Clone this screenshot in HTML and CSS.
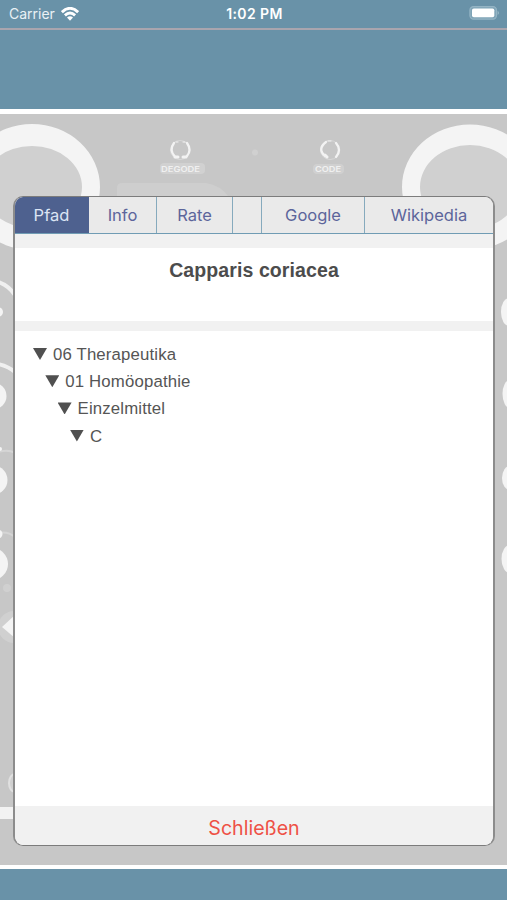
FILE: index.html
```html
<!DOCTYPE html>
<html lang="de">
<head>
<meta charset="utf-8">
<title>Capparis coriacea</title>
<link rel="stylesheet" href="styles.css">
</head>
<body>
<header class="status">
  <div class="carrier">
    <span>Carrier</span>
    <svg class="wifi" viewBox="0 0 18 14" width="18" height="14">
      <g fill="none" stroke="#fff" stroke-width="2.9">
        <path d="M.9 5.1Q9-2.4 17.1 5.1"/>
        <path d="M3.9 8.4Q9 3.7 14.1 8.4"/>
      </g>
      <path d="M6 10.6Q9 8 12 10.6L9 13.8Z" fill="#fff"/>
    </svg>
  </div>
  <time class="clock">1:02 PM</time>
  <svg class="battery" viewBox="0 0 31 14" width="31" height="14">
    <rect x=".9" y=".6" width="26.6" height="12.6" rx="3.6" fill="#7fa4b7" stroke="#94b4c4" stroke-width="1.2"/>
    <rect x="3" y="2.4" width="22.3" height="8.800" rx="1.8" fill="#fff"/>
    <path d="M28.7 4.7Q30.9 6.900 28.7 9Z" fill="#a3bfcd"/>
  </svg>
</header>
<div class="band"></div>
<main class="stage">
  <svg class="panel" viewBox="0 114 507 751" width="507" height="751">
    <g fill="#d0d0d0">
      <ellipse cx="32" cy="187" rx="59" ry="52"/>
      <ellipse cx="470" cy="187" rx="59" ry="52"/>
    </g>
    <g fill="#f4f4f4" fill-rule="evenodd">
      <path d="M-36 187a68 63 0 1 0 136 0a68 63 0 1 0-136 0M-18 187a50 41 0 1 0 100 0a50 41 0 1 0-100 0"/>
      <path d="M402 187a68 62.500 0 1 0 136 0a68 62.500 0 1 0-136 0M420 187a50 42 0 1 0 100 0a50 42 0 1 0-100 0"/>
    </g>
    <path d="M117 197v-9q0-5 5-5h84q14 2 23 14Z" fill="#cecece"/>
    <g fill="none" stroke="#d8d8d8" stroke-width="1">
      <circle cx="180" cy="150" r="9.500"/>
      <circle cx="330" cy="150" r="9.500"/>
    </g>
    <g fill="none" stroke="#f3f3f3" stroke-width="2.300" stroke-linecap="round">
      <path d="M174 143Q169 150 174.500 156M187 143Q192 150 187 156"/>
      <path d="M326 142Q317 149 325 156M336 143Q342 150 336 157"/>
      <path d="M175 157h3M183 157h3M325 155l2 2" stroke-width="3"/>
      <path d="M176 142h2M183 142h2M328 141h3" stroke-width="1"/>
    </g>
    <rect x="160" y="163" width="45" height="11" rx="4" fill="#d1d1d1"/>
    <rect x="313" y="164" width="31" height="10" rx="4" fill="#d0d0d0"/>
    <text class="mark" x="161" y="172" textLength="39" lengthAdjust="spacingAndGlyphs">DEGODE</text>
    <text class="mark" x="315" y="172" textLength="26" lengthAdjust="spacingAndGlyphs">CODE</text>
    <circle cx="255" cy="152.500" r="3" fill="#d0d0d0"/>
    <g fill="none" stroke="#f0f0f0" stroke-width="4">
      <path d="M-2 282Q8 285 15 295M-2 364Q8 366 15 372"/>
      <path d="M-2 452Q8 449 15 453M-2 533Q8 531 15 537" stroke="#d5d5d5" stroke-width="2"/>
    </g>
    <g fill="#f4f4f4">
      <circle cx="-2" cy="312" r="5"/>
      <circle cx="-7" cy="396" r="13.500"/>
      <circle cx="0" cy="449" r="2"/>
      <circle cx="-7" cy="480" r="14.500"/>
      <circle cx="-2" cy="534" r="4.500"/>
      <circle cx="-8" cy="564" r="16"/>
      <ellipse cx="509" cy="312" rx="8" ry="14"/>
      <ellipse cx="510" cy="394" rx="7.500" ry="14"/>
      <ellipse cx="510" cy="478" rx="8" ry="12"/>
      <ellipse cx="510" cy="559" rx="8.500" ry="14"/>
    </g>
    <circle cx="7" cy="588" r="4" fill="#d0d0d0"/>
    <circle cx="14" cy="627" r="16" fill="#d0d0d0"/>
    <path d="M15 615v23L2 627Z" fill="#f4f4f4"/>
    <ellipse cx="15" cy="783" rx="6" ry="9" fill="#d0d0d0" stroke="#e0e0e0" stroke-width="2"/>
    <path d="M0 807h18v12H0Z" fill="#f2f2f2"/>
  </svg>
  <section class="dialog">
    <nav class="tabs">
      <a class="tab active">Pfad</a>
      <a class="tab">Info</a>
      <a class="tab">Rate</a>
      <a class="tab"></a>
      <a class="tab">Google</a>
      <a class="tab">Wikipedia</a>
    </nav>
    <h1 class="title">Capparis coriacea</h1>
    <ul class="tree">
      <li class="node">06 Therapeutika
        <ul>
          <li class="node">01 Homöopathie
            <ul>
              <li class="node">Einzelmittel
                <ul>
                  <li class="node">C</li>
                </ul>
              </li>
            </ul>
          </li>
        </ul>
      </li>
    </ul>
    <button class="close">Schließen</button>
  </section>
</main>
</body>
</html>
```
FILE: styles.css
```css
* {
  box-sizing: border-box;
}

body {
  margin: 0;
  height: 900px;
  display: flex;
  flex-direction: column;
  overflow: hidden;
  background: #6992a8;
  font-family: Inter, "Liberation Sans", sans-serif;
}

.status {
  height: 30px;
  flex: none;
  display: grid;
  grid-template-columns: 1fr auto 1fr;
  align-items: center;
  padding: 0 7px 0 9px;
  border-bottom: 2px solid #a9a5ae;
  color: #fff;
  font-size: 14px;
  line-height: 28px;
}

.carrier {
  display: flex;
  align-items: center;
  gap: 6px;
  color: #e9f1f5;
}

.clock {
  font-weight: 600;
  font-size: 14px;
  letter-spacing: 0.4px;
}

.battery {
  justify-self: end;
  position: relative;
  top: -1px;
}

.band {
  height: 79px;
  flex: none;
}

.stage {
  position: relative;
  height: 760px;
  flex: none;
  padding: 82px 12px 18px 13px;
  border-top: 5px solid #fff;
  border-bottom: 4px solid #fff;
  background: #c7c7c7;
}

.panel {
  position: absolute;
  top: 0;
  left: 0;
}

.mark {
  font-size: 8px;
  font-weight: 600;
  fill: #f0f0f0;
}

.dialog {
  position: relative;
  height: 650px;
  display: flex;
  flex-direction: column;
  overflow: hidden;
  border: 1.5px solid #7c7c7c;
  border-left-width: 2px;
  border-right-width: 2px;
  border-left-color: #8c8c8c;
  border-right-color: #8c8c8c;
  border-radius: 10px;
  background: #fff;
}

.tabs {
  height: 37px;
  flex: none;
  display: grid;
  grid-template-columns: 74px 68px 76px 29px 103px 1fr;
  border-bottom: 1px solid #709cb4;
  background: #eaeaea;
}

.tab {
  display: flex;
  align-items: center;
  justify-content: center;
  border-right: 1px solid #86aabd;
  color: #5c659b;
  font-size: 16.5px;
}

.tab:last-child {
  border-right: 0;
}

.tab.active {
  background: #4e618f;
  border-color: #4e618f;
  color: #dce5f4;
}

.title {
  height: 97px;
  flex: none;
  margin: 0;
  padding-top: 10px;
  border-top: 14px solid #f1f1f1;
  border-bottom: 10px solid #f1f1f1;
  color: #4c4c4c;
  font: bold 19.5px/24px "Liberation Sans", sans-serif;
  letter-spacing: 0.1px;
  text-align: center;
}

.tree {
  flex: 1;
  padding: 10px 18px;
  color: #555;
  font: 16.8px/27.2px "Liberation Sans", sans-serif;
  letter-spacing: 0.15px;
}

.tree,
.tree ul {
  margin: 0;
  list-style: none;
}

.tree ul {
  padding-left: 12.3px;
}

.node::before {
  content: "";
  display: inline-block;
  width: 14px;
  height: 12px;
  margin-right: 6px;
  background: #505050;
  clip-path: polygon(0 0, 100% 0, 50% 100%);
}

.close {
  height: 39px;
  flex: none;
  padding: 4px 0 0;
  border: 0;
  background: #f1f1f1;
  color: #ee5146;
  font: 19.6px/24px Inter, "Liberation Sans", sans-serif;
}
```
